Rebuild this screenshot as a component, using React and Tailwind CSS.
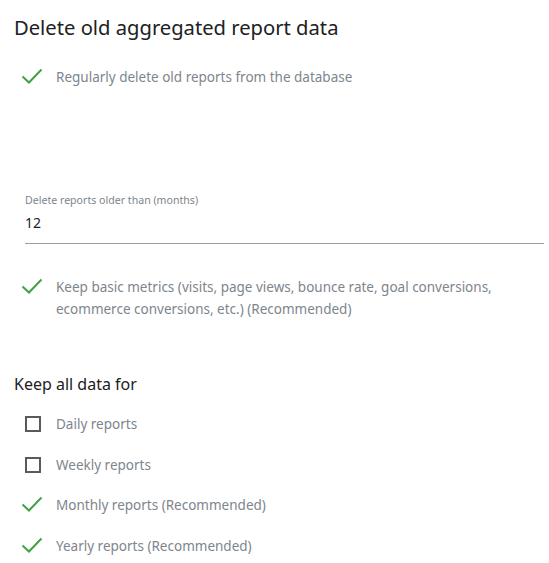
import React, { useState } from "react";

function CheckIcon() {
  return (
    <svg width="22" height="16" viewBox="0 0 22 16" className="block">
      <path d="M1.5 8.5 L8 14.5 L20.5 1.5" fill="none" stroke="#43a047" strokeWidth="2" />
    </svg>
  );
}

function CheckRow({ checked, onToggle, children, className = "" }) {
  return (
    <label className={"flex items-start cursor-pointer " + className} onClick={onToggle}>
      <span className="w-[42px] shrink-0 flex pl-[9px] pt-[2px]">
        {checked ? (
          <span className="-ml-[2px]">
            <CheckIcon />
          </span>
        ) : (
          <span className="block w-4 h-4 border-2 border-[#5a5a5a] mt-[1px] ml-[2px]" />
        )}
      </span>
      <span className="text-[13.5px] leading-[22px] text-[#7d858d]">{children}</span>
    </label>
  );
}

export default function App() {
  const [deleteOld, setDeleteOld] = useState(true);
  const [months, setMonths] = useState("12");
  const [keepBasic, setKeepBasic] = useState(true);
  const [keep, setKeep] = useState({ daily: false, weekly: false, monthly: true, yearly: true });

  const toggle = (k) => setKeep((prev) => ({ ...prev, [k]: !prev[k] }));

  return (
    <div className="bg-white min-h-[563px] pl-[14px] pr-[5px] font-['Noto_Sans',sans-serif]">
      <h2 className="pt-[12px] text-[20.2px] leading-[30px] text-[#212121]">
        Delete old aggregated report data
      </h2>

      <CheckRow checked={deleteOld} onToggle={() => setDeleteOld(!deleteOld)} className="mt-[24px]">
        Regularly delete old reports from the database
      </CheckRow>

      <div className="mt-[105px] pl-[11px]">
        <div className="text-[10.6px] leading-[14px] text-[#7d858d]">Delete reports older than (months)</div>
        <input
          type="text"
          value={months}
          onChange={(e) => setMonths(e.target.value)}
          className="w-full mt-[7px] pb-[11px] text-[14px] leading-[18px] text-[#212121] border-b border-[#9e9e9e] outline-none bg-transparent"
        />
      </div>

      <CheckRow checked={keepBasic} onToggle={() => setKeepBasic(!keepBasic)} className="mt-[32px]">
        Keep basic metrics (visits, page views, bounce rate, goal conversions, ecommerce conversions, etc.) (Recommended)
      </CheckRow>

      <h3 className="mt-[52px] text-[16px] leading-[24px] text-[#212121]">Keep all data for</h3>

      <div className="mt-[17px] flex flex-col gap-[18.5px]">
        <CheckRow checked={keep.daily} onToggle={() => toggle("daily")}>Daily reports</CheckRow>
        <CheckRow checked={keep.weekly} onToggle={() => toggle("weekly")}>Weekly reports</CheckRow>
        <CheckRow checked={keep.monthly} onToggle={() => toggle("monthly")}>Monthly reports (Recommended)</CheckRow>
        <CheckRow checked={keep.yearly} onToggle={() => toggle("yearly")}>Yearly reports (Recommended)</CheckRow>
      </div>
    </div>
  );
}
